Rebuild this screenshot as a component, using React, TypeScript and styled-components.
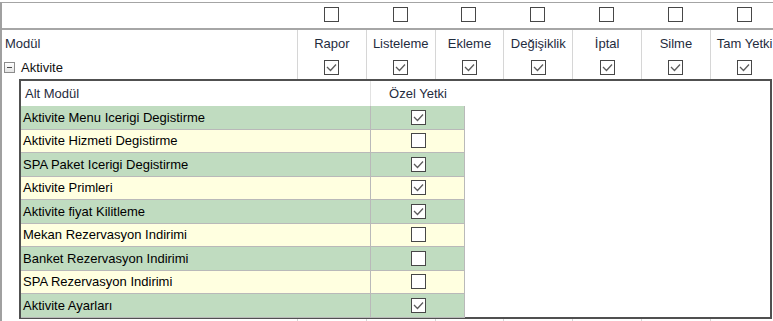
import React from "react";
import styled, { createGlobalStyle } from "styled-components";

const GlobalStyle = createGlobalStyle`
  html, body {
    margin: 0;
    padding: 0;
    background: #ffffff;
    overflow: hidden;
  }
  body {
    font-family: "Liberation Sans", Arial, sans-serif;
    font-size: 13px;
    color: #111;
  }
`;

const COLS = "295px repeat(7, 68.8px)";

const Grid = styled.div`
  margin-top: 2px;
  width: 790px;
  border-top: 1px solid #a4a4a4;
  border-left: 2px solid #a0a0a0;
`;

const FilterRow = styled.div`
  display: grid;
  grid-template-columns: ${COLS};
  height: 25px;
  border-bottom: 2px solid #a6a6a6;
`;

const FilterCell = styled.div`
  display: flex;
  justify-content: center;
  padding-top: 4px;
`;

const HeaderRow = styled.div`
  display: grid;
  grid-template-columns: ${COLS};
  height: 26px;
`;

const HeaderCell = styled.div<{ $first?: boolean }>`
  display: flex;
  align-items: center;
  justify-content: ${({ $first }) => ($first ? "flex-start" : "center")};
  padding-left: ${({ $first }) => ($first ? "3px" : "0")};
  border-left: ${({ $first }) => ($first ? "none" : "1px solid #d6d6d6")};
  color: #1f2c3e;
  white-space: nowrap;
  overflow: hidden;
`;

const GroupRow = styled.div`
  display: grid;
  grid-template-columns: ${COLS};
  height: 23px;
`;

const GroupCell = styled.div<{ $first?: boolean }>`
  display: flex;
  align-items: center;
  justify-content: ${({ $first }) => ($first ? "flex-start" : "center")};
  padding-left: ${({ $first }) => ($first ? "2px" : "0")};
  gap: 6px;
  border-left: ${({ $first }) => ($first ? "none" : "1px solid #d6d6d6")};
`;

const TailRow = styled(GroupRow)`
  height: 12px;
`;

const ExpandBox = styled.span`
  width: 9px;
  height: 9px;
  border: 1px solid #8c8c8c;
  background: linear-gradient(#ffffff, #e4e4e4);
  display: inline-flex;
  align-items: center;
  justify-content: center;

  &::after {
    content: "";
    width: 5px;
    height: 1px;
    background: #4a4a4a;
  }
`;

const DetailRow = styled.div`
  padding-left: 17px;
`;

const DetailBox = styled.div`
  width: 753px;
  box-sizing: border-box;
  border: 2px solid #505050;
  height: 240px;
  background: #fff;
`;

const SUB_COLS = "349px 95px";

const SubHeader = styled.div`
  display: grid;
  grid-template-columns: ${SUB_COLS};
  height: 25px;
`;

const SubHeaderCell = styled.div<{ $center?: boolean }>`
  display: flex;
  align-items: center;
  justify-content: ${({ $center }) => ($center ? "center" : "flex-start")};
  padding-left: ${({ $center }) => ($center ? "0" : "4px")};
  border-left: ${({ $center }) => ($center ? "1px solid #e2e2e2" : "none")};
  color: #1f2c3e;
`;

const SubRow = styled.div<{ $alt: boolean }>`
  display: grid;
  grid-template-columns: ${SUB_COLS};
  width: 444px;
  height: 23.5px;
  box-sizing: border-box;
  background: ${({ $alt }) => ($alt ? "#ffffe0" : "#c0dcc0")};
  border-bottom: 1px solid #b9b9b9;
  border-right: 1px solid #b9b9b9;
`;

const SubCell = styled.div<{ $center?: boolean }>`
  display: flex;
  align-items: center;
  justify-content: ${({ $center }) => ($center ? "center" : "flex-start")};
  padding-left: ${({ $center }) => ($center ? "0" : "2px")};
  border-left: ${({ $center }) => ($center ? "1px solid #b9b9b9" : "none")};
  color: #000;
  white-space: nowrap;
`;

const Box = styled.span`
  width: 15px;
  height: 15px;
  box-sizing: border-box;
  border: 1px solid #474747;
  background: #fff;
  display: inline-flex;
  align-items: center;
  justify-content: center;
`;

const Checkbox: React.FC<{ checked?: boolean }> = ({ checked }) => (
  <Box>
    {checked && (
      <svg width="13" height="13" viewBox="0 0 13 13">
        <polyline
          points="2,6 5.5,9.5 11,3.5"
          fill="none"
          stroke="#5c5c5c"
          strokeWidth="1.3"
        />
      </svg>
    )}
  </Box>
);

const columns = ["Rapor", "Listeleme", "Ekleme", "Değişiklik", "İptal", "Silme", "Tam Yetki"];

const subModules: { name: string; checked: boolean }[] = [
  { name: "Aktivite Menu Icerigi Degistirme", checked: true },
  { name: "Aktivite Hizmeti Degistirme", checked: false },
  { name: "SPA Paket Icerigi Degistirme", checked: true },
  { name: "Aktivite Primleri", checked: true },
  { name: "Aktivite fiyat Kilitleme", checked: true },
  { name: "Mekan Rezervasyon Indirimi", checked: false },
  { name: "Banket Rezervasyon Indirimi", checked: false },
  { name: "SPA Rezervasyon Indirimi", checked: false },
  { name: "Aktivite Ayarları", checked: true },
];

const App: React.FC = () => {
  return (
    <>
      <GlobalStyle />
      <Grid>
        <FilterRow>
          <div />
          {columns.map((c) => (
            <FilterCell key={c}>
              <Checkbox />
            </FilterCell>
          ))}
        </FilterRow>
        <HeaderRow>
          <HeaderCell $first>Modül</HeaderCell>
          {columns.map((c) => (
            <HeaderCell key={c}>{c}</HeaderCell>
          ))}
        </HeaderRow>
        <GroupRow>
          <GroupCell $first>
            <ExpandBox />
            Aktivite
          </GroupCell>
          {columns.map((c) => (
            <GroupCell key={c}>
              <Checkbox checked />
            </GroupCell>
          ))}
        </GroupRow>
        <DetailRow>
          <DetailBox>
            <SubHeader>
              <SubHeaderCell>Alt Modül</SubHeaderCell>
              <SubHeaderCell $center>Özel Yetki</SubHeaderCell>
            </SubHeader>
            {subModules.map((m, i) => (
              <SubRow key={m.name} $alt={i % 2 === 1}>
                <SubCell>{m.name}</SubCell>
                <SubCell $center>
                  <Checkbox checked={m.checked} />
                </SubCell>
              </SubRow>
            ))}
          </DetailBox>
        </DetailRow>
        <TailRow>
          <div />
          {columns.map((c) => (
            <GroupCell key={c} />
          ))}
        </TailRow>
      </Grid>
    </>
  );
};

export default App;
